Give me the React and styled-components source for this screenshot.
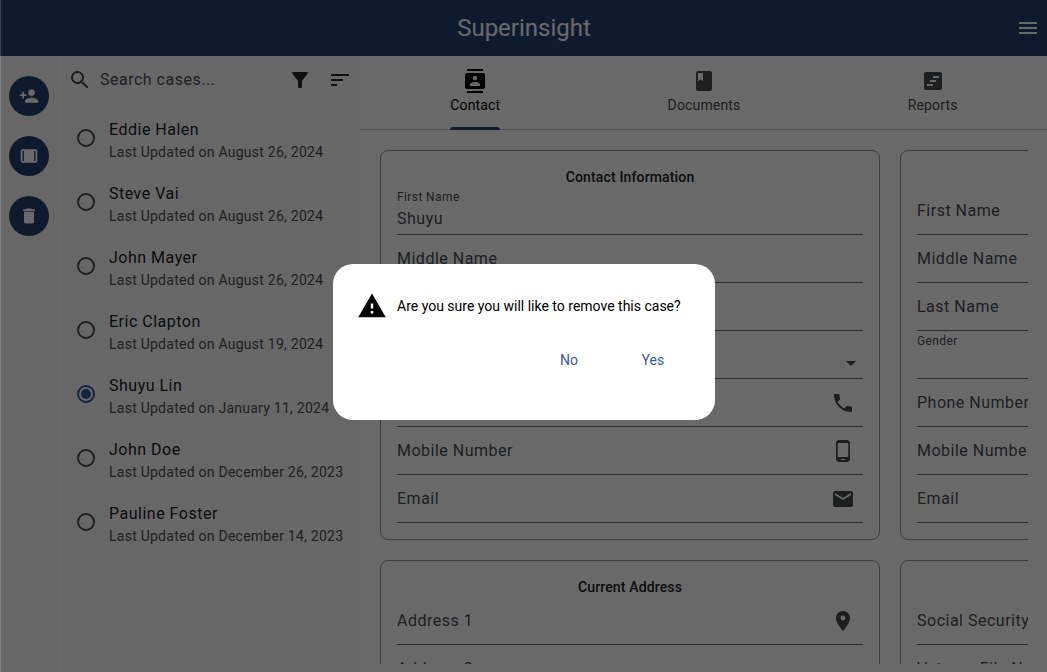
import React from "react";
import styled, { createGlobalStyle } from "styled-components";
import {
  MdPersonAdd, MdDelete, MdSearch, MdFilterAlt, MdSort, MdMenu, MdContacts, MdBook,
  MdViewTimeline, MdPhone, MdPhoneAndroid, MdMail, MdLocationOn, MdArrowDropDown, MdWarning,
} from "react-icons/md";

const Global = createGlobalStyle`
  * { box-sizing: border-box; }
  body { margin: 0; font-family: Roboto, "Liberation Sans", sans-serif; overflow: hidden; }
`;

const Page = styled.div`
  position: relative;
  display: flex;
  flex-direction: column;
  height: 672px;
  background: #fff;
  color: #202224;
  overflow: hidden;
`;
const Header = styled.header`
  display: grid;
  grid-template-columns: 1fr auto 1fr;
  align-items: center;
  height: 56px;
  flex: none;
  padding: 0 7px 0 8px;
  background: #234373;
  color: #fff;
`;
const Title = styled.h1`
  grid-column: 2;
  margin: 0;
  font-size: 24px;
  line-height: 28px;
  font-weight: 400;
`;
const MenuButton = styled.div`
  display: flex;
  justify-content: flex-end;
  font-size: 24px;
`;
const Body = styled.div`
  display: flex;
  flex: 1;
  min-height: 0;
`;
const Rail = styled.nav`
  display: flex;
  flex-direction: column;
  align-items: center;
  gap: 20px;
  width: 60px;
  padding: 20px 1px 0 0;
  border-right: 2px solid #fff;
  background: #fbfbfc;
`;
const RoundButton = styled.div`
  display: flex;
  align-items: center;
  justify-content: center;
  width: 40px;
  height: 40px;
  margin-left: 1px;
  border-radius: 50%;
  background: #234373;
  color: #fff;
  font-size: 20px;
`;
const Cases = styled.aside`
  width: 300px;
  background: #fbfbfc;
`;
const SearchRow = styled.div`
  display: flex;
  align-items: center;
  height: 50px;
  padding: 0 8px 2px;
  border-bottom: 1px solid #fff;
  svg { font-size: 24px; flex: none; }
`;
const SearchText = styled.span`
  flex: 1;
  margin-left: 8px;
  font-size: 16px;
  letter-spacing: 0.5px;
  color: #4c4e53;
`;
const SearchActions = styled.div`
  display: flex;
  gap: 16px;
  color: #28292b;
`;
const CaseRow = styled.div`
  display: flex;
  height: 64px;
  padding-left: 17px;
`;
const Radio = styled.span`
  display: flex;
  align-items: center;
  justify-content: center;
  width: 18px;
  height: 18px;
  margin-top: 23px;
  border: 2px solid ${(p) => (p.$on ? "#355a9a" : "#494b50")};
  border-radius: 50%;
  &::after {
    content: "";
    width: 10px;
    height: 10px;
    flex: none;
    border-radius: 50%;
    background: ${(p) => (p.$on ? "#355a9a" : "transparent")};
  }
`;
const CaseText = styled.div`
  padding: 12px 0 0 14px;
  white-space: nowrap;
`;
const CaseName = styled.div`
  font-size: 16px;
  line-height: 24px;
  letter-spacing: 0.5px;
`;
const CaseDate = styled.div`
  font-size: 14px;
  line-height: 20px;
  letter-spacing: 0.25px;
  color: #4c4e53;
`;
const Main = styled.main`
  display: flex;
  flex-direction: column;
  flex: 1;
  min-width: 0;
`;
const Tabs = styled.div`
  display: grid;
  grid-template-columns: repeat(3, 1fr);
  height: 74px;
  flex: none;
  padding-left: 1px;
  border-bottom: 1px solid #c4c6cf;
`;
const Tab = styled.div`
  display: flex;
  flex-direction: column;
  align-items: center;
  justify-self: center;
  height: 74px;
  padding-top: 13px;
  font-size: 14px;
  line-height: 20px;
  letter-spacing: 0.15px;
  color: ${(p) => (p.$on ? "#000" : "#494b50")};
  svg { font-size: 24px; margin-bottom: 2px; }
  &::after {
    content: "";
    width: 100%;
    height: 3px;
    margin-top: auto;
    border-radius: 3px 3px 0 0;
    background: ${(p) => (p.$on ? "#234373" : "transparent")};
  }
`;
const Cards = styled.div`
  display: grid;
  grid-template-columns: 500px 500px;
  grid-auto-rows: 390px;
  gap: 20px;
  margin: 20px 19px 8px 20px;
  flex: 1;
  min-height: 0;
  overflow: hidden;
`;
const Card = styled.section`
  padding: 16px;
  border: 1px solid #96979a;
  border-radius: 8px;
`;
const CardTitle = styled.h2`
  margin: 0;
  height: 20px;
  text-align: center;
  font-size: 14px;
  line-height: 20px;
  font-weight: 500;
  letter-spacing: 0.15px;
`;
const FieldBox = styled.div`
  display: flex;
  align-items: center;
  justify-content: space-between;
  height: 48px;
  padding-right: 8px;
  border-bottom: 1px solid #6a6b6e;
  font-size: 16px;
  line-height: 24px;
  letter-spacing: 0.5px;
  color: #4c4e53;
  white-space: nowrap;
  svg { font-size: 24px; color: #46494c; }
`;
const FieldText = styled.div`
  display: flex;
  flex-direction: column;
  height: 48px;
  padding-top: ${(p) => (p.$floating ? 2 : 12)}px;
`;
const FloatLabel = styled.span`
  font-size: 12px;
  line-height: 16px;
  letter-spacing: 0.4px;
`;
const FieldValue = styled.span`
  margin-top: 2px;
`;
const DropArrow = styled.span`
  display: flex;
  padding-top: 17px;
  margin-right: -8px;
`;
const Barrier = styled.div`
  position: absolute;
  inset: 0;
  display: flex;
  align-items: center;
  justify-content: center;
  padding: 12px 0 0 0;
  border-left: 1px solid rgba(255, 255, 255, 0.18);
  background: rgba(0, 0, 0, 0.587);
`;
const Dialog = styled.div`
  width: 382px;
  height: 156px;
  padding: 26px 24px;
  border-radius: 20px;
  background: #fff;
  color: #000;
`;
const Message = styled.div`
  display: flex;
  align-items: center;
  gap: 10px;
  height: 32px;
  font-size: 14px;
  white-space: nowrap;
  svg { font-size: 30px; flex: none; }
`;
const Actions = styled.div`
  display: flex;
  justify-content: flex-end;
  gap: 8px;
  margin-top: 18px;
`;
const TextButton = styled.div`
  display: flex;
  align-items: center;
  justify-content: center;
  width: 76px;
  height: 40px;
  font-size: 14px;
  letter-spacing: 0.1px;
  color: #355a9a;
`;

function CarouselIcon() {
  return (
    <svg width="20" height="20" viewBox="0 0 24 24" fill="currentColor">
      <path fillRule="evenodd" d="M4 4h16a2 2 0 0 1 2 2v12a2 2 0 0 1-2 2H4a2 2 0 0 1-2-2V6a2 2 0 0 1 2-2zM4.2 6v12h1.6V6zM18.2 6v12h1.6V6z" />
    </svg>
  );
}

function Field({ label, value, icon: Icon, select }) {
  const floating = value !== undefined || select;
  return (
    <FieldBox>
      <FieldText $floating={floating}>
        {floating ? <FloatLabel>{label}</FloatLabel> : label}
        {value && <FieldValue>{value}</FieldValue>}
      </FieldText>
      {Icon && <Icon />}
      {select && <DropArrow><MdArrowDropDown /></DropArrow>}
    </FieldBox>
  );
}

const cases = [
  ["Eddie Halen", "August 26, 2024"],
  ["Steve Vai", "August 26, 2024"],
  ["John Mayer", "August 26, 2024"],
  ["Eric Clapton", "August 19, 2024"],
  ["Shuyu Lin", "January 11, 2024"],
  ["John Doe", "December 26, 2023"],
  ["Pauline Foster", "December 14, 2023"],
];

export default function App() {
  return (
    <Page>
      <Global />
      <Header>
        <Title>Superinsight</Title>
        <MenuButton><MdMenu /></MenuButton>
      </Header>
      <Body>
        <Rail>
          <RoundButton><MdPersonAdd /></RoundButton>
          <RoundButton><CarouselIcon /></RoundButton>
          <RoundButton><MdDelete /></RoundButton>
        </Rail>
        <Cases>
          <SearchRow>
            <MdSearch color="#44474e" />
            <SearchText>Search cases...</SearchText>
            <SearchActions><MdFilterAlt /><MdSort /></SearchActions>
          </SearchRow>
          {cases.map(([name, date]) => (
            <CaseRow key={name}>
              <Radio $on={name === "Shuyu Lin"} />
              <CaseText>
                <CaseName>{name}</CaseName>
                <CaseDate>Last Updated on {date}</CaseDate>
              </CaseText>
            </CaseRow>
          ))}
        </Cases>
        <Main>
          <Tabs>
            <Tab $on><MdContacts />Contact</Tab>
            <Tab><MdBook />Documents</Tab>
            <Tab><MdViewTimeline />Reports</Tab>
          </Tabs>
          <Cards>
            <Card>
              <CardTitle>Contact Information</CardTitle>
              <Field label="First Name" value="Shuyu" />
              <Field label="Middle Name" />
              <Field label="Last Name" />
              <Field label="" select />
              <Field label="" icon={MdPhone} />
              <Field label="Mobile Number" icon={MdPhoneAndroid} />
              <Field label="Email" icon={MdMail} />
            </Card>
            <Card>
              <CardTitle />
              <Field label="First Name" />
              <Field label="Middle Name" />
              <Field label="Last Name" />
              <Field label="Gender" select />
              <Field label="Phone Number" icon={MdPhone} />
              <Field label="Mobile Number" icon={MdPhoneAndroid} />
              <Field label="Email" icon={MdMail} />
            </Card>
            <Card>
              <CardTitle>Current Address</CardTitle>
              <Field label="Address 1" icon={MdLocationOn} />
              <Field label="Address 2" />
            </Card>
            <Card>
              <CardTitle />
              <Field label="Social Security Number" />
              <Field label="Veteran File Number" />
            </Card>
          </Cards>
        </Main>
      </Body>
      <Barrier>
        <Dialog>
          <Message><MdWarning />Are you sure you will like to remove this case?</Message>
          <Actions>
            <TextButton>No</TextButton>
            <TextButton>Yes</TextButton>
          </Actions>
        </Dialog>
      </Barrier>
    </Page>
  );
}
